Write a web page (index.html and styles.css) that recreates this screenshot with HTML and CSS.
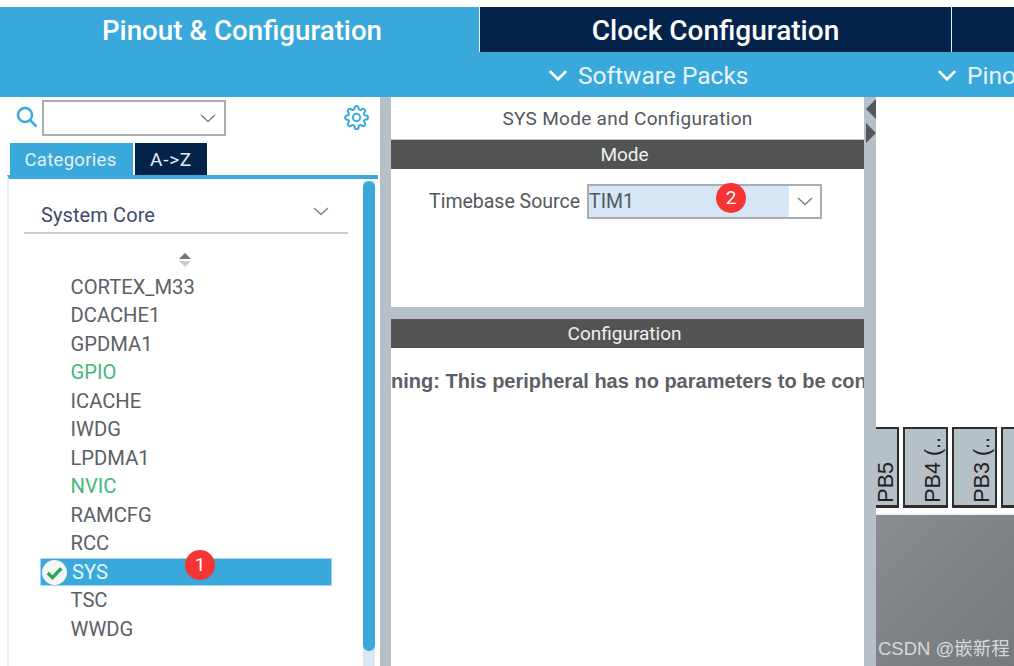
FILE: index.html
```html
<!DOCTYPE html>
<html lang="en">
<head>
    <meta charset="UTF-8">
    <meta name="viewport" content="width=device-width, initial-scale=1.0">
    <title>Pinout &amp; Configuration</title>
    <link rel="stylesheet" href="styles.css">
</head>
<body>
    <nav class="main-tabs">
        <div class="main-tab active">Pinout &amp; Configuration</div>
        <div class="main-tab clock">Clock Configuration</div>
        <div class="main-tab rest"></div>
    </nav>
    <div class="sub-bar">
        <div class="sub-item packs">
            <svg class="sub-chevron" viewBox="0 0 16 10"><path d="M1.5 1.5 8 8l6.5-6.5"/></svg>
            <span>Software Packs</span>
        </div>
        <div class="sub-item pinout">
            <svg class="sub-chevron" viewBox="0 0 16 10"><path d="M1.5 1.5 8 8l6.5-6.5"/></svg>
            <span>Pinout</span>
        </div>
    </div>
    <main class="workspace">
        <aside class="left-panel">
            <div class="search-row">
                <svg class="search-icon" viewBox="0 0 22 22"><circle cx="9" cy="9" r="7"/><path d="M14 14l6.500 6.500"/></svg>
                <div class="search-box">
                    <svg class="select-chevron" viewBox="0 0 16 9"><path d="M1 1l7 6.500L15 1"/></svg>
                </div>
                <svg class="gear-icon" viewBox="0 0 24 24">
                    <circle cx="12" cy="12" r="3.500"/>
                    <path d="M19.4 15a1.65 1.65 0 0 0 .33 1.82l.06.06a2 2 0 0 1 0 2.83 2 2 0 0 1-2.83 0l-.06-.06a1.65 1.65 0 0 0-1.82-.33 1.65 1.65 0 0 0-1 1.51V21a2 2 0 0 1-2 2 2 2 0 0 1-2-2v-.09A1.65 1.65 0 0 0 9 19.4a1.65 1.65 0 0 0-1.82.33l-.06.06a2 2 0 0 1-2.83 0 2 2 0 0 1 0-2.83l.06-.06a1.65 1.65 0 0 0 .33-1.82 1.65 1.65 0 0 0-1.51-1H3a2 2 0 0 1-2-2 2 2 0 0 1 2-2h.09A1.65 1.65 0 0 0 4.6 9a1.65 1.65 0 0 0-.33-1.82l-.06-.06a2 2 0 0 1 0-2.83 2 2 0 0 1 2.83 0l.06.06a1.65 1.65 0 0 0 1.82.33H9a1.65 1.65 0 0 0 1-1.51V3a2 2 0 0 1 2-2 2 2 0 0 1 2 2v.09a1.65 1.65 0 0 0 1 1.51 1.65 1.65 0 0 0 1.82-.33l.06-.06a2 2 0 0 1 2.83 0 2 2 0 0 1 0 2.83l-.06.06a1.65 1.65 0 0 0-.33 1.82V9a1.65 1.65 0 0 0 1.51 1H21a2 2 0 0 1 2 2 2 2 0 0 1-2 2h-.09a1.65 1.65 0 0 0-1.51 1z"/>
                </svg>
            </div>
            <div class="side-tabs">
                <div class="side-tab active">Categories</div>
                <div class="side-tab az">A-&gt;Z</div>
            </div>
            <div class="list-frame">
                <div class="list-content">
                    <div class="category">
                        <span>System Core</span>
                        <svg class="select-chevron" viewBox="0 0 16 9"><path d="M1 1l7 6.500L15 1"/></svg>
                    </div>
                    <div class="sort-arrows">
                        <span class="arrow-up"></span>
                        <span class="arrow-down"></span>
                    </div>
                    <ul class="periph-list">
                        <li>CORTEX_M33</li>
                        <li>DCACHE1</li>
                        <li>GPDMA1</li>
                        <li class="green">GPIO</li>
                        <li>ICACHE</li>
                        <li>IWDG</li>
                        <li>LPDMA1</li>
                        <li class="green">NVIC</li>
                        <li>RAMCFG</li>
                        <li>RCC</li>
                        <li class="selected">
                            <svg class="check-icon" viewBox="0 0 24 24"><circle cx="12" cy="12" r="12"/><path d="M5.500 12.500l4.500 4.500 8.500-9"/></svg>
                            SYS
                            <span class="badge badge-one">1</span>
                        </li>
                        <li>TSC</li>
                        <li>WWDG</li>
                    </ul>
                </div>
                <div class="scroll-track"><div class="scroll-thumb"></div></div>
            </div>
        </aside>
        <div class="divider"></div>
        <section class="middle-panel">
            <div class="panel-title">SYS Mode and Configuration</div>
            <div class="section-head">Mode</div>
            <div class="mode-body">
                <span class="field-label">Timebase Source</span>
                <div class="field-select">
                    <div class="field-value">TIM1<span class="badge badge-two">2</span></div>
                    <div class="field-arrow">
                        <svg class="select-chevron" viewBox="0 0 16 9"><path d="M1 1l7 6.500L15 1"/></svg>
                    </div>
                </div>
            </div>
            <div class="section-head">Configuration</div>
            <div class="warning">Warning: This peripheral has no parameters to be configured</div>
        </section>
        <div class="divider right-divider">
            <span class="collapse-arrow left"></span>
            <span class="collapse-arrow right"></span>
        </div>
        <section class="chip-view">
            <div class="pins">
                <div class="pin first"><span>PB5</span></div>
                <div class="pin"><span>PB4 (..</span></div>
                <div class="pin"><span>PB3 (..</span></div>
                <div class="pin"></div>
            </div>
            <div class="chip-body"></div>
            <div class="watermark">CSDN @嵌新程</div>
        </section>
    </main>
</body>
</html>
```

FILE: styles.css
```css
* {
    box-sizing: border-box;
}
html, body {
    height: 100%;
}
body {
    margin: 0;
    padding-top: 7px;
    background: white;
    font-family: Roboto, "Liberation Sans", sans-serif;
    color: #54585c;
    overflow: hidden;
}
.main-tabs {
    display: flex;
    height: 45px;
    background: #03234b;
}
.main-tab {
    display: flex;
    align-items: center;
    justify-content: center;
    color: white;
    font-size: 28px;
    font-weight: 500;
    padding-top: 2px;
}
.main-tab.active {
    width: 479px;
    padding-left: 5px;
    background: #39a9dc;
    font-size: 27.700px;
}
.main-tab.clock {
    width: 473px;
    border-left: 1px solid #e6eef3;
    border-right: 1px solid #e6eef3;
}
.main-tab.rest {
    flex: 1;
}
.sub-bar {
    position: relative;
    height: 45px;
    background: #39a9dc;
    color: #e6f4fb;
    font-size: 24.500px;
    overflow: hidden;
}
.sub-item {
    position: absolute;
    top: 1px;
    height: 45px;
    display: flex;
    align-items: center;
    gap: 10px;
    white-space: nowrap;
}
.sub-item.packs {
    left: 548px;
}
.sub-item.pinout {
    left: 937px;
}
.sub-chevron {
    width: 20px;
    height: 13px;
    fill: none;
    stroke: white;
    stroke-width: 2.200;
}
.workspace {
    display: flex;
    height: 569px;
    padding-left: 6px;
}
.left-panel {
    width: 374px;
    display: flex;
    flex-direction: column;
}
.search-row {
    display: flex;
    align-items: center;
    height: 46px;
    padding: 0 11px 4px 10px;
}
.search-icon {
    width: 22px;
    height: 22px;
    fill: none;
    stroke: #39a9dc;
    stroke-width: 2.500;
    margin-right: 4px;
    margin-bottom: 2px;
}
.search-box {
    width: 184px;
    height: 36px;
    border: 2px solid #a7adb1;
    display: flex;
    align-items: center;
    justify-content: flex-end;
    padding-right: 8px;
}
.select-chevron {
    width: 16px;
    height: 9px;
    fill: none;
    stroke: #7c8288;
    stroke-width: 1.500;
}
.gear-icon {
    width: 25px;
    height: 25px;
    margin-left: auto;
    margin-bottom: 2px;
    fill: none;
    stroke: #39a9dc;
    stroke-width: 1.900;
}
.side-tabs {
    display: flex;
    gap: 2px;
    height: 32px;
    padding-left: 4px;
}
.side-tab {
    display: flex;
    align-items: center;
    justify-content: center;
    width: 72px;
    padding-top: 1px;
    background: #03234b;
    color: #e6eef3;
    font-size: 19px;
}
.side-tab.active {
    width: 123px;
    padding-right: 2px;
    background: #39a9dc;
    font-size: 18.500px;
    letter-spacing: 0.300px;
}
.side-tab.az {
    letter-spacing: 0.700px;
}
.list-frame {
    flex: 1;
    display: flex;
    min-height: 0;
    margin: 0 2px 0 1px;
    border-top: 4px solid #39a9dc;
    border-left: 2px solid #eef1f4;
}
.list-content {
    flex: 1;
    padding: 16px 0 0 15px;
    min-width: 0;
}
.category {
    display: flex;
    align-items: center;
    justify-content: space-between;
    width: 324px;
    height: 39px;
    padding: 3px 19px 0 17px;
    border-bottom: 2px solid #c6cbcf;
    font-size: 20px;
    letter-spacing: 0.100px;
    color: #3f4a6b;
}
.category .select-chevron {
    margin-bottom: 7px;
}
.sort-arrows {
    display: flex;
    flex-direction: column;
    align-items: center;
    gap: 2px;
    width: 322px;
    margin-top: 19px;
}
.arrow-up, .arrow-down {
    width: 0;
    height: 0;
    border-left: 6px solid transparent;
    border-right: 6px solid transparent;
}
.arrow-up {
    border-bottom: 6px solid #6f7478;
}
.arrow-down {
    border-top: 6px solid #c9cdd0;
}
.periph-list {
    list-style: none;
    margin: 5.500px 0 0 16px;
    padding: 0;
    width: 292px;
}
.periph-list li {
    position: relative;
    display: flex;
    align-items: center;
    height: 28.500px;
    padding-left: 30.500px;
    font-size: 20.200px;
    color: #5c6066;
}
.periph-list li.green {
    color: #44b878;
}
.periph-list li.selected {
    background: #39a9dc;
    color: #e6f4fb;
    padding-left: 31px;
    border: 1px solid #a8d8ee;
}
.check-icon {
    position: absolute;
    left: 1px;
    top: 1px;
    width: 25px;
    height: 25px;
}
.check-icon circle {
    fill: #f2f7f5;
}
.check-icon path {
    fill: none;
    stroke: #2fa35a;
    stroke-width: 3.200;
}
.badge {
    position: absolute;
    width: 30px;
    height: 30px;
    border-radius: 50%;
    background: #f73434;
    color: white;
    font-size: 19px;
    display: flex;
    align-items: center;
    justify-content: center;
}
.badge-one {
    left: 144px;
    top: -9px;
}
.badge-two {
    left: 127px;
    top: -3px;
}
.scroll-track {
    width: 12px;
    margin-right: 3px;
    margin-top: 2px;
    background: #d8e8f5;
}
.scroll-thumb {
    height: 470px;
    background: #39a9dc;
    border-radius: 6px;
}
.divider {
    width: 11px;
    background: #b5c0c7;
}
.right-divider {
    width: 12px;
    padding-top: 2px;
    display: flex;
    flex-direction: column;
    gap: 4px;
}
.collapse-arrow {
    width: 0;
    height: 0;
    margin-left: 2px;
    border-top: 10px solid transparent;
    border-bottom: 10px solid transparent;
}
.collapse-arrow.left {
    border-right: 10px solid #54585c;
}
.collapse-arrow.right {
    border-left: 10px solid #54585c;
}
.middle-panel {
    width: 473px;
    display: flex;
    flex-direction: column;
    overflow: hidden;
}
.panel-title {
    height: 43px;
    display: flex;
    align-items: center;
    justify-content: center;
    font-size: 19px;
    letter-spacing: 0.300px;
    border-bottom: 1px solid #c6cbcf;
}
.section-head {
    height: 29px;
    flex: none;
    display: flex;
    align-items: center;
    justify-content: center;
    padding-right: 6px;
    background: #525453;
    color: #f0f0f0;
    font-size: 19px;
}
.mode-body {
    display: flex;
    align-items: center;
    flex: none;
    height: 150px;
    padding: 0 0 74px 38px;
    gap: 7px;
    background: white;
    border-bottom: 12px solid #b5c0c7;
}
.field-label {
    font-size: 19.500px;
    white-space: nowrap;
}
.field-select {
    position: relative;
    display: flex;
    width: 235px;
    height: 35px;
    border: 2px solid #a7adb1;
}
.field-value {
    position: relative;
    flex: 1;
    display: flex;
    align-items: center;
    background: #d6e6f4;
    font-size: 19.500px;
}
.field-arrow {
    width: 31px;
    display: flex;
    align-items: center;
    justify-content: center;
}
.warning {
    margin-top: 22px;
    margin-left: -37px;
    width: 560px;
    white-space: nowrap;
    font-size: 20px;
    font-weight: 700;
    font-family: "Liberation Sans", sans-serif;
    color: #5c6066;
}
.chip-view {
    position: relative;
    flex: 1;
    min-width: 0;
    display: flex;
    flex-direction: column;
    padding-top: 330px;
    overflow: hidden;
}
.pins {
    display: flex;
    gap: 4px;
    height: 81px;
    flex: none;
}
.pin {
    width: 45px;
    flex: none;
    background: #b5c0c7;
    border: 2px solid #2b2f31;
    border-bottom-width: 3px;
    display: flex;
    align-items: flex-end;
    justify-content: center;
    padding-left: 16px;
}
.pin.first {
    width: 23px;
    border-left: none;
    padding-left: 0;
}
.pin span {
    writing-mode: vertical-rl;
    transform: rotate(180deg);
    font-family: "Liberation Sans", sans-serif;
    font-size: 21.500px;
    line-height: 1;
    color: #222;
    padding-top: 2px;
    white-space: nowrap;
}
.chip-body {
    flex: 1;
    margin-top: 5px;
    border-top: 2px solid #f2f4f5;
    background: linear-gradient(135deg, #8a8d8f, #75797c);
}
.watermark {
    position: absolute;
    left: 2px;
    bottom: 6px;
    color: #d6d9db;
    font-family: "Liberation Sans", "Noto Sans CJK SC", sans-serif;
    font-size: 18.500px;
    white-space: nowrap;
}
```
